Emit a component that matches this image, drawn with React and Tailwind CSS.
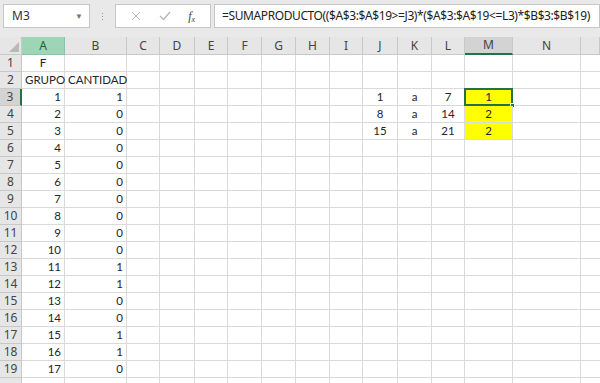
const cols = ["A", "B", "C", "D", "E", "F", "G", "H", "I", "J", "K", "L", "M", "N", ""];
const cantidad = [1, 0, 0, 0, 0, 0, 0, 0, 0, 0, 1, 1, 0, 0, 1, 1, 0];
const ranges = {
  3: ["1", "7", "1"],
  4: ["8", "14", "2"],
  5: ["15", "21", "2"],
};

function Cell({ children, className = "" }) {
  return (
    <div className={`h-[17px] border-r border-b border-[#dadada] px-[3px] leading-[16px] overflow-visible whitespace-nowrap text-[11.5px] text-[#262626] ${className}`}>
      {children}
    </div>
  );
}

function App() {
  const rows = Array.from({ length: 20 }, (_, i) => i + 1);

  return (
    <div className="w-[600px] h-[383px] overflow-hidden bg-white text-[#222]" style={{ fontFamily: "Lato, 'Liberation Sans', sans-serif" }}>
      {/* barra de fórmulas */}
      <div className="h-[37px] bg-[#e9e9e9] flex items-start pt-[4px] pl-[3px] gap-0">
        <div className="w-[87px] h-[24px] bg-white border border-[#c6c6c6] flex items-center justify-between pl-[8px] pr-[6px] text-[12px] text-[#333]" style={{ fontFamily: "'Noto Sans', sans-serif" }}>
          <span>M3</span>
          <span className="text-[8px] text-[#777]">▼</span>
        </div>
        <div className="w-[25px] h-[24px] flex flex-col items-center justify-center gap-[2px]">
          <span className="w-[1px] h-[1px] bg-[#999]" />
          <span className="w-[1px] h-[1px] bg-[#999]" />
          <span className="w-[1px] h-[1px] bg-[#999]" />
        </div>
        <div className="w-[96px] h-[24px] bg-white border border-[#c6c6c6] flex items-center justify-around px-[6px] text-[#aaa]">
          <svg width="10" height="10" viewBox="0 0 10 10"><path d="M1 1L9 9M9 1L1 9" stroke="#b5b5b5" strokeWidth="1" /></svg>
          <svg width="12" height="10" viewBox="0 0 12 10"><path d="M1 5L4.5 8.5L11 1" stroke="#b5b5b5" strokeWidth="1.2" fill="none" /></svg>
          <span className="italic text-[12px] text-[#444]" style={{ fontFamily: "'Liberation Serif', serif" }}>f<sub className="text-[8px]">x</sub></span>
        </div>
        <div className="flex-1 ml-[3px] h-[24px] bg-white border border-[#c6c6c6] flex items-center pl-[7px] text-[12px] text-[#222] whitespace-nowrap overflow-hidden" style={{ fontFamily: "'Noto Sans', sans-serif", letterSpacing: "-0.4px" }}>
          =SUMAPRODUCTO(($A$3:$A$19&gt;=J3)*($A$3:$A$19&lt;=L3)*$B$3:$B$19)
        </div>
      </div>

      {/* hoja */}
      <div className="grid grid-cols-[22px_43px_62px_33px_35px_33px_34px_34px_34px_33px_35px_34px_33px_48px_68px_1fr]">
        {/* encabezados de columna */}
        <div className="h-[18px] bg-[#e6e6e6] border-r border-b border-[#c8c8c8] relative">
          <svg className="absolute right-[2px] bottom-[2px]" width="10" height="10" viewBox="0 0 10 10"><path d="M10 0L10 10L0 10Z" fill="#b9b9b9" /></svg>
        </div>
        {cols.map((c) => (
          <div
            key={c || "x"}
            className={`h-[18px] border-r border-b flex items-center justify-center text-[12px] ${
              c === "A"
                ? "bg-[#9fd5b7] text-[#1d5e37] border-[#8bc4a3]"
                : c === "M"
                ? "bg-[#d3d3d3] text-[#444] border-[#c8c8c8] border-b-2 border-b-[#217346]"
                : "bg-[#e6e6e6] text-[#444] border-[#c8c8c8]"
            }`}
            style={{ fontFamily: "'Noto Sans', sans-serif" }}
          >
            {c}
          </div>
        ))}

        {rows.map((r) => (
          <Row key={r} r={r} />
        ))}
      </div>
    </div>
  );
}

function Row({ r }) {
  const range = ranges[r];
  let a = "";
  let b = "";
  let aAlign = "text-right";
  let bAlign = "text-right";
  if (r === 1) {
    a = "F";
    aAlign = "text-center";
  } else if (r === 2) {
    a = "GRUPO";
    b = "CANTIDAD";
    aAlign = "text-left";
    bAlign = "text-left";
  } else if (r >= 3 && r <= 19) {
    a = r - 2;
    b = cantidad[r - 3];
  }

  return (
    <>
      <div
        className={`h-[17px] border-b flex items-center justify-center text-[12px] text-[#444] ${
          r === 3 ? "bg-[#d3d3d3] border-r-2 border-r-[#217346] border-b-[#c8c8c8]" : "bg-[#e6e6e6] border-r border-[#c8c8c8]"
        }`}
        style={{ fontFamily: "'Noto Sans', sans-serif" }}
      >
        {r < 20 ? r : ""}
      </div>
      <Cell className={aAlign}>{a}</Cell>
      <Cell className={bAlign}>{b}</Cell>
      <Cell />
      <Cell />
      <Cell />
      <Cell />
      <Cell />
      <Cell />
      <Cell />
      <Cell className="text-center">{range ? range[0] : ""}</Cell>
      <Cell className="text-center">{range ? "a" : ""}</Cell>
      <Cell className="text-center">{range ? range[1] : ""}</Cell>
      {range ? (
        <div className="h-[17px] relative bg-[#ffff00] text-center text-[11.5px] text-[#262626] leading-[16px] border-r border-b border-[#dadada]">
          {range[2]}
          {r === 3 && (
            <>
              <div className="absolute -left-[1px] -top-[1px] -right-[1px] -bottom-[1px] border-2 border-[#217346]" />
              <div className="absolute -right-[3px] -bottom-[3px] w-[5px] h-[5px] bg-[#217346] border border-white" />
            </>
          )}
        </div>
      ) : (
        <Cell />
      )}
      <Cell />
      <div className="h-[17px] border-b border-[#dadada]" />
    </>
  );
}

export default App;
